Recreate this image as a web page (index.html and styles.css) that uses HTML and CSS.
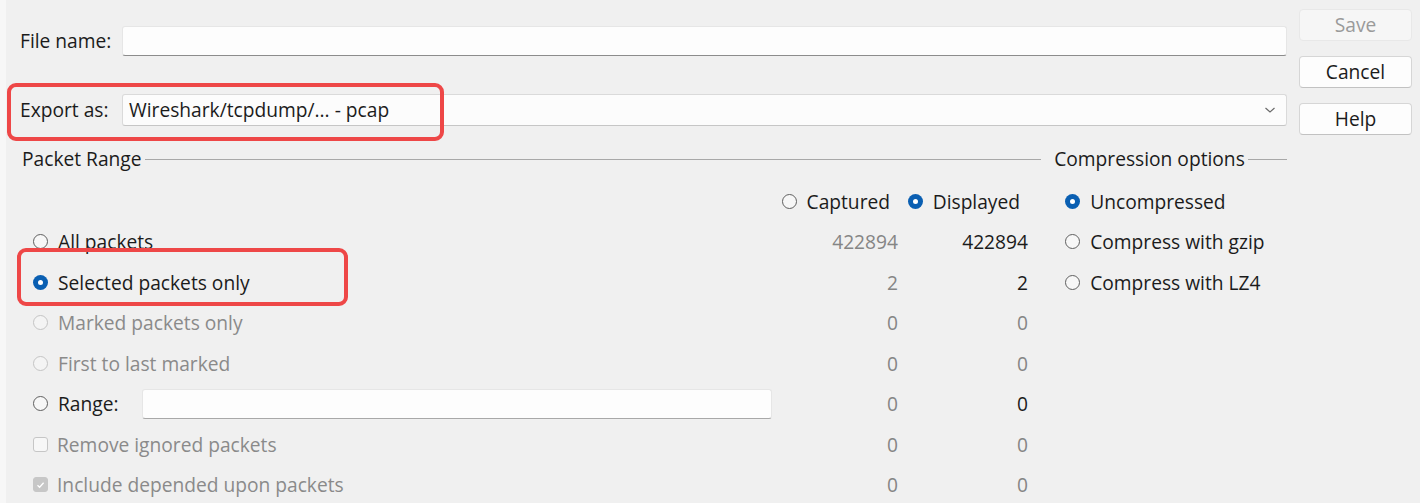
FILE: index.html
```html
<!DOCTYPE html>
<html>
<head>
<meta charset="utf-8">
<link rel="stylesheet" href="styles.css">
</head>
<body>
<div class="dialog">
  <div class="main">
    <div class="field-row file-row">
      <span class="field-label">File name:</span>
      <div class="text-input"></div>
    </div>
    <div class="field-row export-row">
      <span class="field-label">Export as:</span>
      <div class="combo">
        <span class="combo-text">Wireshark/tcpdump/... - pcap</span>
        <svg class="chevron" width="12" height="8" viewBox="0 0 12 8"><path d="M1.5 2 L6 6 L10.5 2" fill="none" stroke="#6a6a6a" stroke-width="1.2"/></svg>
      </div>
    </div>
    <div class="groups">
      <div class="group packet-group">
        <div class="group-title"><span>Packet Range</span><i class="rule"></i></div>
        <div class="range-grid">
          <div class="cell"></div>
          <div class="cell head"><span class="radio"></span><span>Captured</span></div>
          <div class="cell head"><span class="radio checked"></span><span>Displayed</span></div>

          <div class="cell opt"><span class="radio"></span><span>All packets</span></div>
          <div class="cell num dim">422894</div>
          <div class="cell num">422894</div>

          <div class="cell opt"><span class="radio checked"></span><span>Selected packets only</span></div>
          <div class="cell num dim">2</div>
          <div class="cell num">2</div>

          <div class="cell opt disabled"><span class="radio"></span><span>Marked packets only</span></div>
          <div class="cell num dim">0</div>
          <div class="cell num dim">0</div>

          <div class="cell opt disabled"><span class="radio"></span><span>First to last marked</span></div>
          <div class="cell num dim">0</div>
          <div class="cell num dim">0</div>

          <div class="cell opt"><span class="radio"></span><span class="range-label">Range:</span><div class="text-input range-input"></div></div>
          <div class="cell num dim">0</div>
          <div class="cell num">0</div>

          <div class="cell opt disabled"><span class="check"></span><span>Remove ignored packets</span></div>
          <div class="cell num dim">0</div>
          <div class="cell num dim">0</div>

          <div class="cell opt disabled"><span class="check checked"><svg width="9" height="8" viewBox="0 0 9 8"><path d="M1.5 4.2 L3.6 6.2 L7.6 1.8" fill="none" stroke="#fff" stroke-width="1.3"/></svg></span><span>Include depended upon packets</span></div>
          <div class="cell num dim">0</div>
          <div class="cell num dim">0</div>
        </div>
      </div>
      <div class="group comp-group">
        <div class="group-title"><span>Compression options</span><i class="rule"></i></div>
        <div class="comp-list">
          <div class="cell opt"><span class="radio checked"></span><span>Uncompressed</span></div>
          <div class="cell opt"><span class="radio"></span><span>Compress with gzip</span></div>
          <div class="cell opt"><span class="radio"></span><span>Compress with LZ4</span></div>
        </div>
      </div>
    </div>
  </div>
  <div class="buttons">
    <button class="btn disabled">Save</button>
    <button class="btn">Cancel</button>
    <button class="btn">Help</button>
  </div>
  <div class="highlight hl-export"></div>
  <div class="highlight hl-selected"></div>
</div>
</body>
</html>
```
FILE: styles.css
```css
* { box-sizing: border-box; }
html, body { margin: 0; padding: 0; }
body {
  background: #f0f0f0;
  font-family: "Open Sans", "Noto Sans", sans-serif;
  font-size: 19.2px;
  color: #1b1b1b;
  width: 1420px;
  height: 503px;
  overflow: hidden;
}
.dialog {
  position: relative;
  display: flex;
  height: 503px;
  border-left: 6px solid #f7f7f7;
}
.main {
  width: 1281px;
  padding-left: 14px;
}
.field-row {
  display: flex;
  align-items: center;
}
.file-row { margin-top: 26px; height: 30px; }
.export-row { margin-top: 38px; height: 32px; }
.field-label {
  width: 102px;
  flex: none;
  line-height: 1;
}
.text-input {
  flex: 1;
  height: 30px;
  background: #fdfdfd;
  border: 1px solid #e6e6e6;
  border-bottom: 1px solid #8c8c8c;
  border-radius: 3px;
}
.combo {
  flex: 1;
  height: 32px;
  background: #fcfcfc;
  border: 1px solid #dadada;
  border-bottom-color: #c6c6c6;
  border-radius: 3px;
  display: flex;
  align-items: center;
  justify-content: space-between;
  padding: 0 10px 0 6px;
}
.combo-text { line-height: 1; }
.groups {
  display: flex;
  margin-top: 21px;
  gap: 13px;
}
.group-title {
  display: flex;
  align-items: center;
  height: 24px;
  margin-bottom: 10px;
}
.group-title span { line-height: 1; }
.rule {
  flex: 1;
  height: 1px;
  background: #a8a8a8;
  margin-left: 3px;
}
.packet-group { width: 1020px; margin-left: 2px; }
.comp-group { width: 233px; }
.range-grid {
  display: grid;
  grid-template-columns: 756px 120px 130px;
  grid-auto-rows: 40.5px;
}
.cell {
  display: flex;
  align-items: center;
  line-height: 1;
  white-space: nowrap;
}
.head {
  justify-content: flex-end;
  padding-right: 8px;
}
.head .radio { margin-right: 10px; }
.num { justify-content: flex-end; }
.dim { color: #858585; }
.opt { padding-left: 11px; }
.opt .radio, .opt .check { margin-right: 10px; }
.opt .check { margin-right: 9px; }
.disabled { color: #8a8a8a; }
.radio {
  flex: none;
  width: 15px;
  height: 15px;
  border-radius: 50%;
  border: 1px solid #5f5f5f;
  background: #f7f7f7;
}
.radio.checked {
  border: none;
  background: #0a5fb2;
  position: relative;
}
.radio.checked::after {
  content: "";
  position: absolute;
  left: 5px;
  top: 5px;
  width: 5px;
  height: 5px;
  border-radius: 50%;
  background: #fff;
}
.disabled .radio { border-color: #c4c4c4; background: #f4f4f4; }
.check {
  flex: none;
  width: 15px;
  height: 15px;
  border-radius: 3px;
  border: 1px solid #c6c6c6;
  background: #f7f7f7;
  display: flex;
  align-items: center;
  justify-content: center;
}
.check.checked { background: #c7c7c7; border-color: #c7c7c7; }
.range-label { width: 84px; }
.range-input { flex: none; width: 630px; height: 30px; border-bottom-color: #a8a8a8; }
.comp-list {
  display: grid;
  grid-auto-rows: 40.5px;
}
.comp-group .opt { padding-left: 11px; }
.buttons {
  width: 113px;
  margin-left: 12px;
  display: flex;
  flex-direction: column;
  padding-top: 9px;
  gap: 15px;
}
.btn {
  height: 32px;
  font-family: inherit;
  font-size: 19.2px;
  color: #1b1b1b;
  background: #fdfdfd;
  border: 1px solid #d6d6d6;
  border-bottom-color: #c2c2c2;
  border-radius: 4px;
  padding: 0;
  line-height: 1;
}
.btn.disabled {
  background: #f6f6f6;
  border-color: #e8e8e8;
  color: #9a9a9a;
}
.highlight {
  position: absolute;
  border: 4px solid #ee4747;
  border-radius: 9px;
}
.hl-export { left: 1px; top: 83px; width: 437px; height: 58px; }
.hl-selected { left: 11px; top: 248px; width: 331px; height: 58px; }
```
